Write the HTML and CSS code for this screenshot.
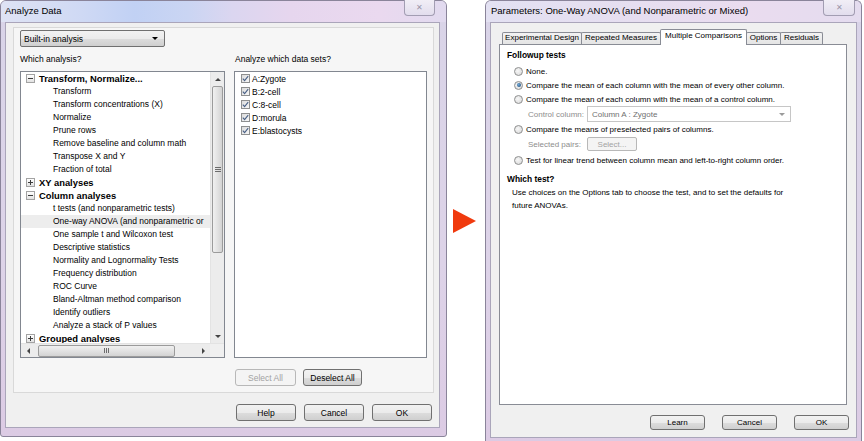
FILE: index.html
```html
<!DOCTYPE html>
<html>
<head>
<meta charset="utf-8">
<title>Analyze Data</title>
<link rel="stylesheet" href="styles.css">
</head>
<body>
<div class="screen">
  <div class="win win-left">
    <div class="titlebar tb-left">
      <span class="title">Analyze Data</span>
      <span class="close close-left">✕</span>
    </div>
    <div class="client client-left">
      <div class="panel">
        <div class="combo"><span>Built-in analysis</span><i class="dd"></i></div>
        <div class="cols">
          <div class="col">
            <div class="label">Which analysis?</div>
            <div class="listbox">
              <div class="tree-body">
                <div class="tree-rows">
                  <div class="row head"><span class="exp"></span><span>Transform, Normalize...</span></div>
                  <div class="row leaf">Transform</div>
                  <div class="row leaf">Transform concentrations (X)</div>
                  <div class="row leaf">Normalize</div>
                  <div class="row leaf">Prune rows</div>
                  <div class="row leaf">Remove baseline and column math</div>
                  <div class="row leaf">Transpose X and Y</div>
                  <div class="row leaf">Fraction of total</div>
                  <div class="row head"><span class="exp plus"></span><span>XY analyses</span></div>
                  <div class="row head"><span class="exp"></span><span>Column analyses</span></div>
                  <div class="row leaf">t tests (and nonparametric tests)</div>
                  <div class="row leaf sel">One-way ANOVA (and nonparametric or</div>
                  <div class="row leaf">One sample t and Wilcoxon test</div>
                  <div class="row leaf">Descriptive statistics</div>
                  <div class="row leaf">Normality and Lognormality Tests</div>
                  <div class="row leaf">Frequency distribution</div>
                  <div class="row leaf">ROC Curve</div>
                  <div class="row leaf">Bland-Altman method comparison</div>
                  <div class="row leaf">Identify outliers</div>
                  <div class="row leaf">Analyze a stack of P values</div>
                  <div class="row head"><span class="exp plus"></span><span>Grouped analyses</span></div>
                </div>
                <div class="vscroll">
                  <div class="sb-btn"><i class="tri up"></i></div>
                  <div class="vtrack"><div class="vthumb"><span class="grip-h"></span></div></div>
                  <div class="sb-btn"><i class="tri down"></i></div>
                </div>
              </div>
              <div class="hscroll">
                <div class="sb-btn"><i class="tri left"></i></div>
                <div class="htrack"><div class="hthumb"><span class="grip-v"></span></div></div>
                <div class="sb-btn"><i class="tri right"></i></div>
                <div class="corner"></div>
              </div>
            </div>
          </div>
          <div class="col">
            <div class="label label-data">Analyze which data sets?</div>
            <div class="listbox data">
              <div class="drow"><span class="chk"><svg width="7" height="7" viewBox="0 0 7 7"><path d="M0.8 3.6 L2.6 5.6 L6.2 1.2" fill="none" stroke="#4a6186" stroke-width="1.1"/></svg></span>A:Zygote</div>
              <div class="drow"><span class="chk"><svg width="7" height="7" viewBox="0 0 7 7"><path d="M0.8 3.6 L2.6 5.6 L6.2 1.2" fill="none" stroke="#4a6186" stroke-width="1.1"/></svg></span>B:2-cell</div>
              <div class="drow"><span class="chk"><svg width="7" height="7" viewBox="0 0 7 7"><path d="M0.8 3.6 L2.6 5.6 L6.2 1.2" fill="none" stroke="#4a6186" stroke-width="1.1"/></svg></span>C:8-cell</div>
              <div class="drow"><span class="chk"><svg width="7" height="7" viewBox="0 0 7 7"><path d="M0.8 3.6 L2.6 5.6 L6.2 1.2" fill="none" stroke="#4a6186" stroke-width="1.1"/></svg></span>D:morula</div>
              <div class="drow"><span class="chk"><svg width="7" height="7" viewBox="0 0 7 7"><path d="M0.8 3.6 L2.6 5.6 L6.2 1.2" fill="none" stroke="#4a6186" stroke-width="1.1"/></svg></span>E:blastocysts</div>
            </div>
            <div class="btnrow">
              <button class="btn btn-sel disabled">Select All</button>
              <button class="btn btn-desel">Deselect All</button>
            </div>
          </div>
        </div>
      </div>
      <div class="footer footer-left">
        <button class="btn fbtn">Help</button>
        <button class="btn fbtn">Cancel</button>
        <button class="btn fbtn">OK</button>
      </div>
    </div>
  </div>

  <div class="arrow-col"><div class="red-arrow"></div></div>

  <div class="win win-right">
    <div class="titlebar tb-right">
      <span class="title">Parameters: One-Way ANOVA (and Nonparametric or Mixed)</span>
      <span class="close close-right">✕</span>
    </div>
    <div class="client client-right">
      <div class="tabarea">
        <div class="tabs">
          <div class="tab t1">Experimental Design</div>
          <div class="tab t2">Repeated Measures</div>
          <div class="tab t3 active">Multiple Comparisons</div>
          <div class="tab t4">Options</div>
          <div class="tab t5">Residuals</div>
        </div>
        <div class="tabpanel">
          <div class="sect sect-first">Followup tests</div>
          <div class="opt opt-first"><span class="radio"></span>None.</div>
          <div class="opt"><span class="radio on"></span>Compare the mean of each column with the mean of every other column.</div>
          <div class="opt"><span class="radio"></span>Compare the mean of each column with the mean of a control column.</div>
          <div class="sub">
            <span class="sublabel">Control column:</span>
            <div class="dcombo"><span>Column A : Zygote</span><i class="tri down gray"></i></div>
          </div>
          <div class="opt"><span class="radio"></span>Compare the means of preselected pairs of columns.</div>
          <div class="sub">
            <span class="sublabel">Selected pairs:</span>
            <button class="btn small disabled">Select...</button>
          </div>
          <div class="opt opt-trend"><span class="radio"></span>Test for linear trend between column mean and left-to-right column order.</div>
          <div class="sect sect-which">Which test?</div>
          <p class="note">Use choices on the Options tab to choose the test, and to set the defaults for<br>future ANOVAs.</p>
        </div>
      </div>
      <div class="footer footer-right">
        <button class="btn rbtn">Learn</button>
        <button class="btn rbtn">Cancel</button>
        <button class="btn rbtn">OK</button>
      </div>
    </div>
  </div>
</div>
</body>
</html>
```

FILE: styles.css
```css
* { box-sizing: border-box; }
html, body { margin: 0; padding: 0; }
body {
  width: 864px;
  height: 441px;
  overflow: hidden;
  background: #ffffff;
  font-family: "Liberation Sans", Arial, sans-serif;
  font-size: 8.5px;
  color: #000;
}
.screen { display: flex; align-items: flex-start; height: 441px; }

/* windows */
.win {
  display: flex;
  flex-direction: column;
  border: 1px solid #8a849a;
  border-radius: 6px 6px 3px 3px;
  background: linear-gradient(180deg, #d9d4e8 0%, #ddd3e8 60%, #dccbe4 100%);
}
.win-left { width: 447px; height: 437px; }
.win-right { width: 377px; height: 441px; border-bottom: none; border-radius: 6px 6px 0 0; }

.titlebar {
  height: 21px;
  flex: none;
  display: flex;
  align-items: center;
  position: relative;
  padding: 0 0 2px 4px;
  font-size: 9.5px;
  border-radius: 5px 5px 0 0;
}
.tb-left {
  background: linear-gradient(90deg, #dfe3f4 0%, #cfd9f4 18%, #c1d1f4 30%, #cad5f3 42%, #dbd6f0 52%, #e6d6ee 65%, #ead9ef 85%, #e1daef 100%);
}
.tb-right {
  padding-left: 5px;
  background: linear-gradient(90deg, #e3e1f2 0%, #e6def0 40%, #eadcef 70%, #e4dcef 100%);
}
.close {
  position: absolute;
  top: -1px;
  width: 31px;
  height: 16px;
  border: 1px solid #a29db2;
  border-top: none;
  border-radius: 0 0 4px 4px;
  background: linear-gradient(180deg, #f1eef6, #e2dded);
  color: #9a95a8;
  font-size: 8px;
  line-height: 15px;
  text-align: center;
}
.close-left { right: 11px; }
.close-right { right: 6px; width: 32px; }

.client {
  flex: 1;
  background: #f0f0f0;
  border: 1px solid #aaa5ba;
  display: flex;
  flex-direction: column;
}
.client-left { margin: 0 6px 8px 4px; }
.client-right { margin: 0 4px 3px 4px; }

/* left panel */
.panel {
  margin: 4px 5px 0 7px;
  height: 366px;
  flex: none;
  border: 1px solid #d9d9d9;
  background: #f6f6f6;
}
.combo {
  margin: 2px 0 0 6px;
  width: 145px;
  height: 17px;
  border: 1px solid #707070;
  border-radius: 2px;
  background: linear-gradient(180deg, #f2f2f2 0%, #ebebeb 50%, #dddddd 51%, #cfcfcf 100%);
  display: flex;
  align-items: center;
  justify-content: space-between;
  padding: 0 6px 0 3px;
}
.dd {
  width: 0; height: 0;
  border-left: 3px solid transparent;
  border-right: 3px solid transparent;
  border-top: 3px solid #000;
}
.cols {
  display: grid;
  grid-template-columns: 205px 193px;
  column-gap: 9px;
  margin-left: 6px;
}
.label { height: 12px; line-height: 12px; margin: 6px 0 6px; }
.label-data { padding-left: 1px; }
.listbox {
  height: 287px;
  border: 1px solid #828790;
  background: #fff;
  display: flex;
  flex-direction: column;
}
.tree-body { display: flex; height: 271px; }
.tree-rows { flex: 1; overflow: hidden; }
.row {
  height: 13px;
  line-height: 13px;
  white-space: nowrap;
  display: flex;
  align-items: center;
}
.row.head { padding-left: 5px; font-weight: bold; font-size: 9.4px; }
.row.leaf { padding-left: 32px; }
.row.sel { background: #ededed; }
.exp {
  position: relative;
  flex: none;
  width: 9px; height: 9px;
  margin-right: 4px;
  border: 1px solid #a3a3a3;
  background: linear-gradient(180deg, #ffffff, #e2e2e2);
}
.exp::before {
  content: "";
  position: absolute;
  left: 1px; top: 3px;
  width: 5px; height: 1px;
  background: #3c3c3c;
}
.exp.plus::after {
  content: "";
  position: absolute;
  left: 3px; top: 1px;
  width: 1px; height: 5px;
  background: #3c3c3c;
}

/* scrollbars */
.vscroll {
  width: 14px;
  flex: none;
  display: flex;
  flex-direction: column;
  background: #ececec;
  border-left: 1px solid #e3e3e3;
}
.sb-btn {
  width: 14px; height: 14px;
  flex: none;
  display: flex;
  align-items: center;
  justify-content: center;
}
.vtrack { flex: 1; }
.vthumb {
  height: 167px;
  margin: 0 1px;
  border: 1px solid #9b9b9b;
  border-radius: 2px;
  background: linear-gradient(90deg, #f0f0f0, #e2e2e2 50%, #d3d3d3);
  display: flex;
  align-items: center;
  justify-content: center;
}
.grip-h {
  width: 6px; height: 5px;
  border-top: 1px solid #6c6c6c;
  border-bottom: 1px solid #6c6c6c;
  background: linear-gradient(180deg, transparent 1px, #6c6c6c 1px, #6c6c6c 2px, transparent 2px);
}
.hscroll {
  height: 14px;
  display: flex;
  background: #ececec;
  border-top: 1px solid #e3e3e3;
}
.htrack { flex: 1; display: flex; align-items: center; }
.hthumb {
  margin-left: 3px;
  width: 137px;
  height: 12px;
  border: 1px solid #9b9b9b;
  border-radius: 2px;
  background: linear-gradient(180deg, #f0f0f0, #e2e2e2 50%, #d3d3d3);
  display: flex;
  align-items: center;
  justify-content: center;
}
.grip-v {
  width: 5px; height: 5px;
  border-left: 1px solid #6c6c6c;
  border-right: 1px solid #6c6c6c;
  background: linear-gradient(90deg, transparent 1px, #6c6c6c 1px, #6c6c6c 2px, transparent 2px);
}
.corner { width: 14px; background: #f0f0f0; }
.tri { width: 0; height: 0; display: block; }
.tri.up { border-left: 3px solid transparent; border-right: 3px solid transparent; border-bottom: 3px solid #444; }
.tri.down { border-left: 3px solid transparent; border-right: 3px solid transparent; border-top: 3px solid #444; }
.tri.left { border-top: 3px solid transparent; border-bottom: 3px solid transparent; border-right: 3px solid #444; }
.tri.right { border-top: 3px solid transparent; border-bottom: 3px solid transparent; border-left: 3px solid #444; }
.tri.gray { border-top-color: #9a9a9a; }

/* data list */
.data { padding-left: 6px; }
.drow {
  height: 13px;
  display: flex;
  align-items: center;
  white-space: nowrap;
}
.chk {
  width: 9px; height: 9px;
  margin-right: 2px;
  border: 1px solid #8e8f8f;
  background: linear-gradient(135deg, #dcdcdc, #f6f6f6);
  display: flex;
  align-items: center;
  justify-content: center;
}
.chk svg { display: block; }

/* buttons */
.btn {
  font-family: "Liberation Sans", Arial, sans-serif;
  font-size: 8.5px;
  color: #000;
  padding: 0;
  border: 1px solid #707070;
  border-radius: 3px;
  background: linear-gradient(180deg, #f2f2f2 0%, #ebebeb 50%, #dddddd 51%, #cfcfcf 100%);
  text-align: center;
}
.btn.disabled {
  color: #a3a3a3;
  border-color: #b8b8b8;
  background: #f4f4f4;
}
.btnrow { display: flex; gap: 7px; margin: 11px 0 0 1px; }
.btn-sel { width: 61px; height: 17px; }
.btn-desel { width: 59px; height: 17px; }
.footer { display: flex; justify-content: flex-end; }
.footer-left { margin-top: 11px; gap: 8px; padding-right: 7px; }
.fbtn { width: 60px; height: 17px; }

/* arrow */
.arrow-col {
  width: 38px;
  height: 441px;
  flex: none;
  display: flex;
  align-items: center;
  padding: 1px 0 0 6px;
}
.red-arrow {
  width: 0; height: 0;
  border-left: 23px solid #f03a0e;
  border-top: 12.5px solid transparent;
  border-bottom: 12.5px solid transparent;
}

/* right dialog */
.tabarea { margin: 6px 0 0 8px; width: 348px; }
.tabs { display: flex; align-items: flex-end; height: 15px; padding-left: 3px; }
.tab {
  height: 12px;
  line-height: 10px;
  border: 1px solid #898c95;
  border-bottom: none;
  margin-right: -1px;
  font-size: 8px;
  text-align: center;
  white-space: nowrap;
  background: linear-gradient(180deg, #f3f3f3, #e4e4e4);
  border-radius: 2px 2px 0 0;
}
.tab.active {
  height: 16px;
  line-height: 12px;
  background: #fff;
  position: relative;
  margin-bottom: -1px;
  z-index: 1;
}
.t1 { width: 80px; }
.t2 { width: 80px; }
.t3 { width: 87px; }
.t4 { width: 35px; }
.t5 { width: 43px; }
.tabpanel {
  height: 361px;
  border: 1px solid #898c95;
  background: #fff;
  padding: 4px 0 0 7px;
  font-size: 8px;
}
.sect { font-weight: bold; font-size: 8.4px; height: 12px; line-height: 12px; }
.sect-which { margin-top: 6px; }
.opt {
  height: 14px;
  display: flex;
  align-items: center;
  padding-left: 7px;
  white-space: nowrap;
}
.opt-first { margin-top: 3px; }
.opt-trend { margin-top: 1px; }
.radio {
  position: relative;
  width: 9px; height: 9px;
  margin-right: 3px;
  flex: none;
  border: 1px solid #8e8f8f;
  border-radius: 50%;
  background: radial-gradient(circle at 40% 40%, #f7f7f7, #d6d6d6);
}
.radio.on::after {
  content: "";
  position: absolute;
  left: 1.5px; top: 1.5px;
  width: 4px; height: 4px;
  border-radius: 50%;
  background: radial-gradient(circle at 40% 40%, #6fa9d8, #173f6b);
}
.sub {
  height: 16px;
  display: flex;
  align-items: center;
  padding-left: 21px;
  color: #8d8d8d;
}
.sublabel { width: 59px; flex: none; }
.dcombo {
  width: 204px;
  height: 16px;
  border: 1px solid #c6c6c6;
  background: #fff;
  display: flex;
  align-items: center;
  justify-content: space-between;
  padding: 0 5px 0 4px;
  color: #6f6f6f;
}
.btn.small { width: 50px; height: 14px; font-size: 8px; border-radius: 2px; }
.note { margin: 1px 0 0 5px; line-height: 13px; font-size: 8px; }
.footer-right { margin-top: 10px; gap: 17px; padding-right: 7px; }
.rbtn { width: 55px; height: 15px; font-size: 8px; }
```
